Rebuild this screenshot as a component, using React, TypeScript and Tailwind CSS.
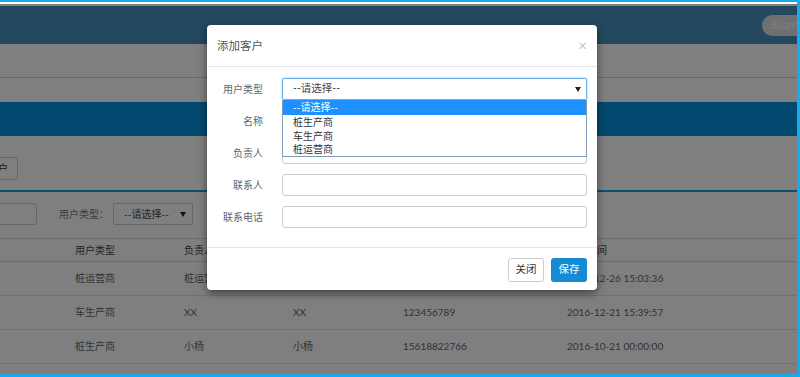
import React from "react";

const font = { fontFamily: '"Lato", "Noto Sans CJK SC", sans-serif' };

function Tri({ className = "" }: { className?: string }) {
  return (
    <svg width="6" height="5" viewBox="0 0 6 5" className={className}>
      <path d="M0 0 L6 0 L3 5 Z" fill="#222" />
    </svg>
  );
}

const rows = [
  ["桩运营商", "桩运营商", "桩运营商", "18888888888", "2016-12-26 15:03:36"],
  ["车生产商", "XX", "XX", "123456789", "2016-12-21 15:39:57"],
  ["桩生产商", "小杨", "小杨", "15618822766", "2016-10-21 00:00:00"],
];

function Cells({ cells }: { cells: string[] }) {
  return (
    <>
      <div className="w-[75px] shrink-0" />
      <div className="w-[109px] shrink-0">{cells[0]}</div>
      <div className="w-[109px] shrink-0">{cells[1]}</div>
      <div className="w-[110px] shrink-0">{cells[2]}</div>
      <div className="w-[164px] shrink-0">{cells[3]}</div>
      <div className="flex-1">{cells[4]}</div>
    </>
  );
}

export default function App() {
  return (
    <div
      className="w-[800px] h-[377px] border-t-2 border-r-[3px] border-b-[3px] border-[#1aa9ec] overflow-hidden bg-white"
      style={font}
    >
      <div className="relative h-full border-t-2 border-white overflow-hidden">
        {/* Background page */}
        <div className="flex flex-col h-full text-[10px] text-[#666]">
          <div className="h-[2px] bg-white" />
          <div className="h-[38px] bg-[#4890bf] flex items-center justify-end">
            <div className="h-[21px] w-[80px] mr-[-45px] rounded-full bg-[#dde1e4] flex items-center pl-[9px] text-[11px] text-white">
              Search
            </div>
          </div>
          <div className="h-[33px] bg-white" />
          <div className="h-px bg-[#d2d2d2]" />
          <div className="h-[24px] bg-white" />
          <div className="h-[34px] bg-[#0292dc]" />
          <div className="flex-1 bg-white flex flex-col">
            <div className="mt-[21px] flex">
              <div className="ml-[-42px] h-[23px] w-[60px] border border-[#ccc] rounded-[3px] flex items-center justify-center text-[#333]">
                添加客户
              </div>
            </div>
            <div className="mt-[10px] h-[2px] bg-[#1aa0dc]" />
            <div className="mt-[11px] flex items-center h-[22px]">
              <div className="ml-[-83px] w-[120px] h-[22px] border border-[#ccc] rounded-[3px]" />
              <div className="ml-[22px] text-[#777]">用户类型：</div>
              <div className="ml-[4px] w-[80px] h-[22px] border border-[#ccc] rounded-[2px] flex items-center justify-between pl-[10px] pr-[6px] text-[#444]">
                <span>--请选择--</span>
                <Tri />
              </div>
            </div>
            <div className="mt-[13px] flex items-center h-[24px] border-t border-b border-[#d8d8d8] text-[#444]">
              <Cells cells={["用户类型", "负责人", "联系人", "联系电话", "创建时间"]} />
            </div>
            {rows.map((r, i) => (
              <div key={i} className="flex items-center h-[34px] border-b border-[#e0e0e0] text-[#666]">
                <Cells cells={r} />
              </div>
            ))}
          </div>
        </div>

        {/* Overlay */}
        <div className="absolute inset-0 bg-black/50" />

        {/* Modal */}
        <div className="absolute left-[207px] top-[21px] w-[390px] bg-white rounded-[4px] shadow-[0_3px_9px_rgba(0,0,0,0.5)] flex flex-col" style={font}>
          <div className="h-[42px] border-b border-[#e5e5e5] flex items-center justify-between pl-[10px] pr-[10px]">
            <span className="text-[11.5px] text-[#555]">添加客户</span>
            <span className="text-[15px] leading-none text-[#c4c4c4]">×</span>
          </div>
          <div className="pt-[11px] pb-[19px] pr-[10px] flex flex-col gap-[10px] text-[10px] text-[#666]">
            {/* 用户类型 */}
            <div className="flex items-center h-[22px]">
              <div className="w-[56px] text-right shrink-0">用户类型</div>
              <div className="ml-[19px] flex-1 relative">
                <div className="h-[22px] border border-[#66afe9] rounded-[2px] flex items-center justify-between pl-[10px] pr-[5px] text-[10.5px] text-[#444] shadow-[0_0_3px_rgba(102,175,233,0.6)]">
                  <span>--请选择--</span>
                  <Tri />
                </div>
                <div className="absolute left-0 right-0 top-[22px] z-10 bg-white border border-[#7f9db9] border-t-0 text-[10px] text-[#333]">
                  <div className="h-[15px] bg-[#1e90ff] text-white pl-[10px] flex items-center">--请选择--</div>
                  <div className="h-[14px] pl-[10px] flex items-center">桩生产商</div>
                  <div className="h-[14px] pl-[10px] flex items-center">车生产商</div>
                  <div className="h-[13px] pl-[10px] flex items-center">桩运营商</div>
                </div>
              </div>
            </div>
            {["名称", "负责人", "联系人", "联系电话"].map((l) => (
              <div key={l} className="flex items-center h-[22px]">
                <div className="w-[56px] text-right shrink-0">{l}</div>
                <div className="ml-[19px] flex-1 h-[22px] border border-[#ccc] rounded-[3px]" />
              </div>
            ))}
          </div>
          <div className="border-t border-[#e5e5e5] pt-[10px] pb-[8px] pr-[10px] flex justify-end gap-[7px] text-[10.5px]">
            <div className="h-[24px] w-[36px] border border-[#ccc] rounded-[3px] flex items-center justify-center text-[#333]">关闭</div>
            <div className="h-[24px] w-[36px] bg-[#168bd3] rounded-[3px] flex items-center justify-center text-white">保存</div>
          </div>
        </div>
      </div>
    </div>
  );
}
